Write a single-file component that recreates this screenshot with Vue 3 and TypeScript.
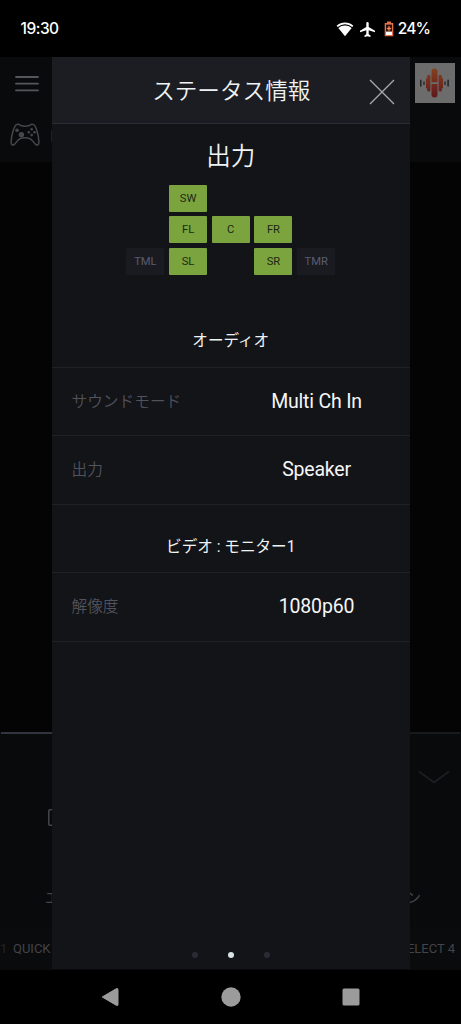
<script setup lang="ts">
interface Speaker {
  id: string
  col: number
  row: number
  active: boolean
}

interface InfoRow {
  label: string
  value: string
}

interface Section {
  title: string
  rows: InfoRow[]
}

const speakers: Speaker[] = [
  { id: 'SW', col: 2, row: 1, active: true },
  { id: 'FL', col: 2, row: 2, active: true },
  { id: 'C', col: 3, row: 2, active: true },
  { id: 'FR', col: 4, row: 2, active: true },
  { id: 'TML', col: 1, row: 3, active: false },
  { id: 'SL', col: 2, row: 3, active: true },
  { id: 'SR', col: 4, row: 3, active: true },
  { id: 'TMR', col: 5, row: 3, active: false },
]

const sections: Section[] = [
  {
    title: 'オーディオ',
    rows: [
      { label: 'サウンドモード', value: 'Multi Ch In' },
      { label: '出力', value: 'Speaker' },
    ],
  },
  {
    title: 'ビデオ : モニター1',
    rows: [{ label: '解像度', value: '1080p60' }],
  },
]

const pageCount = 3
const currentPage = 2
</script>

<template>
  <div class="phone">
    <header class="status-bar">
      <span class="clock">19:30</span>
      <div class="status-icons">
        <svg class="wifi" width="18" height="15" viewBox="0 0 18 15">
          <path d="M1.2 4.4C5.7.4 12.3.4 16.8 4.4" fill="none" stroke="#fff" stroke-width="1.7" />
          <path d="M2.3 6C6.3 2.7 11.7 2.7 15.7 6L9 14.2Z" fill="#fff" />
        </svg>
        <svg class="plane" width="15" height="15" viewBox="2 2 20 20">
          <path d="M22 15.5v-2l-8.4-5V3.6a1.6 1.6 0 0 0-3.2 0v4.9l-8.4 5v2l8.4-2.6v5.4l-2.4 1.6V22l4-1.1 4 1.1v-2.1l-2.4-1.6v-5.4z" fill="#fff" />
        </svg>
        <svg class="battery" width="10" height="16" viewBox="0 0 10 16">
          <path d="M3 .5h4v1.6h2.3v13.2H.7V2.1H3z" fill="#e5714b" />
          <path d="M2 3.6h6v7H2z" fill="#28100b" />
          <path d="M2 10.7h6v3.3H2z" fill="#fff" />
          <path d="M4.3 5.3h1.4v1.5h1.5v1.4H5.7v1.5H4.3V8.2H2.8V6.8h1.5z" fill="#f28058" />
        </svg>
        <span class="percent">24%</span>
      </div>
    </header>

    <main class="stage">
      <div class="page">
        <div class="page-top">
          <div class="page-bar">
            <svg class="menu" width="24" height="18" viewBox="0 0 24 18">
              <path d="M1 2h22M1 8.7h22M1 15.4h22" stroke="#55565a" stroke-width="1.8" stroke-linecap="round" />
            </svg>
            <div class="logo">
              <svg width="38" height="38" viewBox="0.7 0 38 38">
                <defs>
                  <linearGradient id="bars" x1="0" y1="5" x2="0" y2="34" gradientUnits="userSpaceOnUse">
                    <stop offset="0" stop-color="#86401f" />
                    <stop offset="1" stop-color="#5f171c" />
                  </linearGradient>
                </defs>
                <path d="M5.5 16.2v5.8M32.8 16.2v5.8" stroke="#26272c" stroke-width="1.6" stroke-linecap="round" />
                <path d="M8.7 18v2.4M29.7 18v2.4" stroke="#26272c" stroke-width="1.4" stroke-linecap="round" />
                <g fill="url(#bars)">
                  <rect x="10.7" y="14" width="2" height="10.5" rx="1" />
                  <rect x="25.7" y="14" width="2" height="10.5" rx="1" />
                  <rect x="11.8" y="10.7" width="3.3" height="16.8" rx="1.5" />
                  <rect x="23.3" y="10.7" width="3.3" height="16.8" rx="1.5" />
                  <path d="M16.2 18.2V7.5a3 3 0 0 1 6 0v10.7z" />
                  <path d="M16.2 20h6v10.6a3 3 0 0 1-6 0z" />
                </g>
              </svg>
            </div>
          </div>
          <div class="source">
            <svg width="30" height="24" viewBox="0 0 30 24">
              <path d="M6.5 1.6c1.5-.6 2.9-.1 4.1.9 2.8.8 6.1.8 8.9 0 1.2-1 2.6-1.5 4.1-.9 2.4 1 5.3 11.5 5.3 17.7 0 2.5-1.6 3.5-3.3 2.1-2.1-1.8-3.4-5.2-6-5.9-3-.9-6.2-.9-9.2 0-2.6.7-3.9 4.1-6 5.9-1.7 1.4-3.3.4-3.3-2.1C1.1 13.1 4.1 2.6 6.5 1.6z" fill="none" stroke="#46474b" stroke-width="1.5" />
              <g fill="#46474b">
                <circle cx="7" cy="7.2" r="1.8" />
                <circle cx="11.4" cy="11.7" r="2.7" />
                <circle cx="21.7" cy="6.3" r="1.3" />
                <circle cx="18.8" cy="9.2" r="1.3" />
                <circle cx="24.5" cy="9.2" r="1.3" />
                <circle cx="21.7" cy="12.1" r="1.3" />
              </g>
            </svg>
            <i class="source-edge"></i>
          </div>
        </div>
        <div class="artwork"></div>
        <div class="progress"><i></i></div>
        <div class="player">
          <svg class="chevron" width="32" height="15" viewBox="0 0 32 15">
            <path d="M1 1.5L16 12.5L31 1.5" fill="none" stroke="#1e1f22" stroke-width="1.6" />
          </svg>
          <svg class="tile" width="16" height="17" viewBox="0 0 16 17">
            <rect x=".8" y=".8" width="14.4" height="15.4" rx="1" fill="none" stroke="#45464a" stroke-width="1.5" />
          </svg>
          <div class="tabs"><span>エコ</span><span>ゾーン</span></div>
        </div>
        <div class="quick"><span class="prev">1</span><span>QUICK</span><span class="last">SELECT 4</span></div>
      </div>

      <section class="panel">
        <div class="panel-head">
          <h1>ステータス情報</h1>
          <svg class="close" width="26" height="26" viewBox="0 0 26 26">
            <path d="M1 1L25 25M25 1L1 25" stroke="#a7a9ad" stroke-width="1.3" />
          </svg>
        </div>
        <h2>出力</h2>
        <div class="speakers">
          <span
            v-for="s in speakers"
            :key="s.id"
            :class="['speaker', `c${s.col}`, `r${s.row}`, { active: s.active }]"
          >{{ s.id }}</span>
        </div>
        <div v-for="section in sections" :key="section.title" class="section">
          <h3>{{ section.title }}</h3>
          <div v-for="row in section.rows" :key="row.label" class="row">
            <span class="label">{{ row.label }}</span>
            <span class="value">{{ row.value }}</span>
          </div>
        </div>
        <div class="dots">
          <i v-for="n in pageCount" :key="n" :class="{ on: n === currentPage }"></i>
        </div>
      </section>
    </main>

    <nav class="nav-bar">
      <svg width="18" height="20" viewBox="0 0 18 20">
        <path d="M1.2 10L15.5 1.6Q17 1 17 2.5V17.5Q17 19 15.5 18.4Z" fill="#9b9b9b" stroke="#9b9b9b" stroke-linejoin="round" />
      </svg>
      <svg width="20" height="20" viewBox="0 0 20 20"><circle cx="10" cy="10" r="9.7" fill="#9b9b9b" /></svg>
      <svg width="18" height="18" viewBox="0 0 18 18"><rect x=".5" y=".5" width="17" height="17" rx="1.5" fill="#9b9b9b" /></svg>
    </nav>
  </div>
</template>

<style>
body {
  background: #000;
}
</style>

<style scoped>
.phone {
  display: flex;
  flex-direction: column;
  width: 461px;
  height: 1024px;
  overflow: hidden;
  background: #000;
  font-family: Roboto, "Noto Sans CJK JP", sans-serif;
}
.status-bar {
  display: flex;
  flex: none;
  align-items: center;
  justify-content: space-between;
  box-sizing: border-box;
  height: 57px;
  padding: 1px 31px 0 20.5px;
  color: #fff;
  font: 500 15.5px/20px Inter, sans-serif;
}
.clock {
  letter-spacing: -0.5px;
}
.status-icons {
  display: flex;
  align-items: center;
}
.plane {
  margin-left: 6px;
}
.battery {
  margin-left: 9px;
}
.percent {
  margin-left: 4px;
  letter-spacing: -0.9px;
}
.stage {
  position: relative;
  flex: none;
  height: 912.5px;
}
.page {
  display: flex;
  flex-direction: column;
  height: 100%;
  overflow: hidden;
  background: #090a0c;
  color: #434448;
}
.page-top {
  height: 105px;
}
.page-bar {
  display: flex;
  justify-content: space-between;
  align-items: flex-start;
  height: 66px;
  padding: 0 6px 0 15px;
}
.menu {
  margin-top: 18px;
}
.logo {
  width: 38px;
  height: 38px;
  padding: 1px;
  margin-top: 6px;
  background: #6c6c6c;
}
.source {
  display: flex;
  padding-left: 10px;
}
.source-edge {
  width: 1px;
  height: 12px;
  margin: 7px 0 0 11px;
  background: #1d1e21;
}
.artwork {
  height: 570px;
  background: #040405;
}
.progress {
  height: 2px;
  margin: 0 1px;
  background: #191a1f;
}
.progress i {
  display: block;
  width: 51px;
  height: 2px;
  background: #32333f;
}
.player {
  display: flex;
  flex-direction: column;
  height: 193px;
}
.chevron {
  align-self: flex-end;
  margin: 36px 11px 0 0;
}
.tile {
  margin: 24px 0 0 48px;
}
.tabs {
  display: flex;
  justify-content: space-between;
  padding: 60px 40px 0 45px;
  font-size: 15px;
  line-height: 24px;
}
.quick {
  display: flex;
  flex: 1;
  align-items: center;
  padding: 2px 6px 0 0;
  background: #0a0b0d;
  font-size: 13px;
  line-height: 20px;
}
.prev {
  width: 13px;
  color: #222326;
}
.last {
  margin-left: auto;
}
.panel {
  position: absolute;
  top: 0;
  left: 51.5px;
  display: flex;
  flex-direction: column;
  width: 358.5px;
  height: 912px;
  background: #131418;
}
.panel-head {
  display: flex;
  flex: none;
  align-items: center;
  box-sizing: border-box;
  height: 67px;
  padding: 0 15px 0 42px;
  border-bottom: 1px solid #2a2b33;
  background: #1c1d22;
}
h1,
h2,
h3 {
  margin: 0;
  color: #eef3f4;
  font-weight: 350;
  text-align: center;
}
h1 {
  flex: 1;
  padding-top: 3px;
  font-size: 22.6px;
  line-height: 34px;
}
.close {
  margin-top: 3px;
}
h2 {
  height: 60.6px;
  font-size: 24.5px;
  line-height: 65px;
}
.speakers {
  display: grid;
  grid-template-columns: repeat(5, 38px);
  grid-template-rows: repeat(3, 27px);
  gap: 4.6px 4.7px;
  align-self: center;
  margin-bottom: 36px;
}
.speaker {
  display: flex;
  align-items: center;
  justify-content: center;
  border-radius: 1px;
  background: #1a1b20;
  color: #5b5c70;
  font-size: 11.2px;
}
.speaker.active {
  background: #7ba43f;
  color: #1c2912;
}
.c1 { grid-column: 1; }
.c2 { grid-column: 2; }
.c3 { grid-column: 3; }
.c4 { grid-column: 4; }
.c5 { grid-column: 5; }
.r1 { grid-row: 1; }
.r2 { grid-row: 2; }
.r3 { grid-row: 3; }
h3 {
  box-sizing: border-box;
  height: 57px;
  border-bottom: 1px solid #202125;
  font-size: 15.6px;
  font-weight: 400;
  line-height: 61px;
}
.section + .section h3 {
  height: 68.5px;
  line-height: 85px;
}
.row {
  display: grid;
  grid-template-columns: 171px 148px;
  align-items: center;
  box-sizing: border-box;
  height: 68.5px;
  padding-left: 20px;
  border-bottom: 1px solid #202125;
}
.label {
  color: #50525c;
  font-size: 15.7px;
  font-weight: 350;
  line-height: 22px;
}
.value {
  color: #f5f6f7;
  font-size: 19.5px;
  letter-spacing: -0.2px;
  line-height: 24px;
  text-align: center;
}
.dots {
  display: flex;
  justify-content: center;
  gap: 30px;
  margin: auto 0 11px;
}
.dots i {
  width: 6px;
  height: 6px;
  border-radius: 50%;
  background: #292c35;
}
.dots .on {
  background: #d9e3e3;
}
.nav-bar {
  display: flex;
  flex: 1;
  align-items: center;
  justify-content: space-between;
  padding: 1px 101px 0;
}
</style>
